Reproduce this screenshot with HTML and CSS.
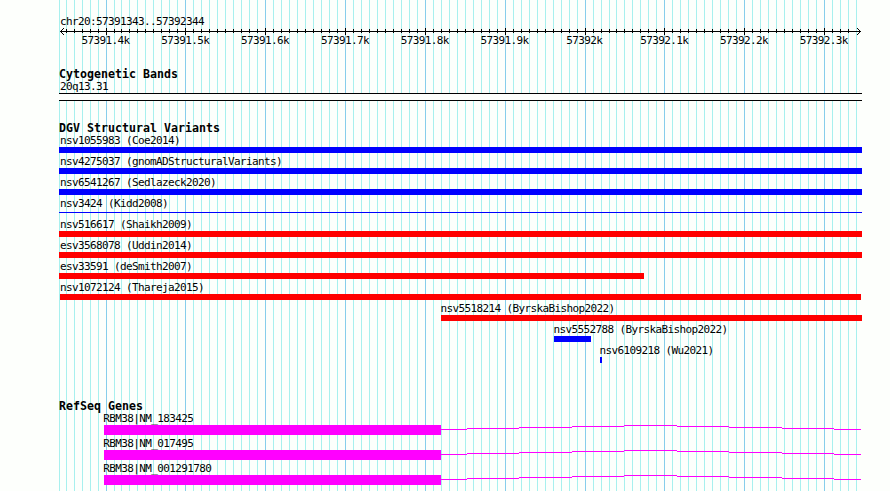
FILE: index.html
```html
<!DOCTYPE html>
<html lang="en">
<head>
<meta charset="utf-8">
<title>chr20:57391343..57392344</title>
<link rel="stylesheet" href="styles.css">
</head>
<body>
<main class="browser">
  <svg class="grid" width="890" height="491" shape-rendering="crispEdges" aria-hidden="true">
    <path id="minor" class="grid-minor"/>
    <path id="major" class="grid-major"/>
  </svg>

  <header class="ruler">
    <div class="region">chr20:57391343..57392344</div>
    <svg class="axis" width="890" height="8" shape-rendering="crispEdges" aria-hidden="true">
      <path d="M60 3.5H861M60.5 3v1M61.5 2v3M62.5 1v1M62.5 5v1M63.5 0v1M63.5 6v1M860.5 3v1M859.5 2v3M858.5 1v1M858.5 5v1M857.5 0v1M857.5 6v1"/>
      <path id="ticks"/>
    </svg>
    <div class="scale">
      <span>57391.4k</span><span>57391.5k</span><span>57391.6k</span><span>57391.7k</span><span>57391.8k</span><span>57391.9k</span><span class="short">57392k</span><span>57392.1k</span><span>57392.2k</span><span>57392.3k</span>
    </div>
  </header>

  <section class="track bands">
    <h2>Cytogenetic Bands</h2>
    <div class="label">20q13.31</div>
    <div class="band"></div>
  </section>

  <section class="track variants">
    <h2>DGV Structural Variants</h2>
    <div class="feature gain"><div class="label">nsv1055983 (Coe2014)</div><div class="bar"></div></div>
    <div class="feature gain"><div class="label">nsv4275037 (gnomADStructuralVariants)</div><div class="bar"></div></div>
    <div class="feature gain"><div class="label">nsv6541267 (Sedlazeck2020)</div><div class="bar"></div></div>
    <div class="feature gain thin"><div class="label">nsv3424 (Kidd2008)</div><div class="bar"></div></div>
    <div class="feature loss"><div class="label">nsv516617 (Shaikh2009)</div><div class="bar"></div></div>
    <div class="feature loss"><div class="label">esv3568078 (Uddin2014)</div><div class="bar"></div></div>
    <div class="feature loss desmith"><div class="label">esv33591 (deSmith2007)</div><div class="bar"></div></div>
    <div class="feature loss thareja"><div class="label">nsv1072124 (Thareja2015)</div><div class="bar"></div></div>
    <div class="feature loss byrska-a"><div class="label">nsv5518214 (ByrskaBishop2022)</div><div class="bar"></div></div>
    <div class="feature gain byrska-b"><div class="label">nsv5552788 (ByrskaBishop2022)</div><div class="bar"></div></div>
    <div class="feature gain wu"><div class="label">nsv6109218 (Wu2021)</div><div class="bar"></div></div>
  </section>

  <section class="track genes">
    <h2>RefSeq Genes</h2>
    <div class="gene"><div class="label">RBM38|NM_183425</div><div class="model"><div class="exon"></div><svg width="420" height="10" shape-rendering="crispEdges"><use href="#intron"/></svg></div></div>
    <div class="gene"><div class="label">RBM38|NM_017495</div><div class="model"><div class="exon"></div><svg width="420" height="10" shape-rendering="crispEdges"><use href="#intron"/></svg></div></div>
    <div class="gene"><div class="label">RBM38|NM_001291780</div><div class="model"><div class="exon"></div><svg width="420" height="10" shape-rendering="crispEdges"><path id="intron" d="M0 4.5H26M26 3.5H78M78 2.5H131M131 1.5H183M183 .5H236M236 1.5H288M288 2.5H341M341 3.5H393M393 4.5H420"/></svg></div></div>
  </section>
</main>
<script src="grid.js"></script>
</body>
</html>
```
FILE: styles.css
```css
* { box-sizing: border-box; }

body {
  margin: 0;
  background: #fdfffc;
  color: #000;
  font-family: "DejaVu Sans Mono", monospace;
  font-size: 11px;
  letter-spacing: -0.622px;
  line-height: 13px;
}

.browser {
  position: relative;
  width: 890px;
  height: 491px;
  overflow: hidden;
}

svg { display: block; fill: none; }

.grid { position: absolute; left: 0; top: 0; }
.grid-minor { stroke: #a8f0ee; }
.grid-major { stroke: #87ceeb; }

.ruler, .track { position: relative; white-space: nowrap; }

.ruler { height: 64px; padding-top: 15px; }
.region { height: 13px; padding-left: 60px; }
.axis { stroke: #000; }
.scale { display: flex; gap: 31.84px; padding-left: 81.4px; margin-top: -2px; }
.scale span { width: 48px; flex: none; }
.scale .short { padding-left: 6px; }

.track { padding-left: 59px; }

h2 {
  height: 14px;
  margin: 0;
  padding-top: 4px;
  font-size: 11.6px;
  font-weight: bold;
  letter-spacing: 0.017px;
  line-height: 13px;
}

.label { height: 15px; padding: 2px 0 0 1px; }

.bands { height: 54px; }
.bands .band {
  width: 803px;
  height: 8px;
  border: solid #000;
  border-width: 1px 0;
  background: #fdfffc;
}

.variants { height: 278px; }
.feature { height: 21px; width: 803px; }
.bar { height: 6px; }
.gain .bar { background: #00f; }
.loss .bar { background: #f00; }
.thin { padding-bottom: 3px; }
.thin .bar { height: 1px; margin-top: 2px; }
.desmith .bar { width: 585px; }
.thareja .bar { width: 801px; margin-left: 1px; }
.byrska-a { width: 421px; margin-left: 382px; }
.byrska-b { width: 37px; margin-left: 495px; }
.wu { width: 2px; margin-left: 541px; }
.byrska-a .label, .byrska-b .label, .wu .label { padding-left: 0; margin-left: -0.5px; }

.genes { padding-left: 104px; }
.genes h2 { margin-left: -45px; }
.gene { height: 25px; }
.gene .label { padding-left: 0; margin-left: -0.8px; }
.model { display: flex; }
.exon { width: 337px; height: 10px; background: #f0f; }
.model svg { stroke: #f0f; }
```
FILE: grid.js
```js
// Gridlines every 10 bp, with a major line every 100 bp.
let minor = "M59.5 0V491", major = "", ticks = "";
for (let i = -5; i <= 94; i++) {
  const x = Math.floor(106.02 + i * 7.984) + 0.5;
  if (i % 10 === 0) {
    major += `M${x} 0V491`;
    ticks += `M${x} 0V7`;
  } else {
    minor += `M${x} 0V491`;
    if (i < 94) ticks += `M${x} 1V5`;
  }
}
document.getElementById("minor").setAttribute("d", minor);
document.getElementById("major").setAttribute("d", major);
document.getElementById("ticks").setAttribute("d", ticks);
```
